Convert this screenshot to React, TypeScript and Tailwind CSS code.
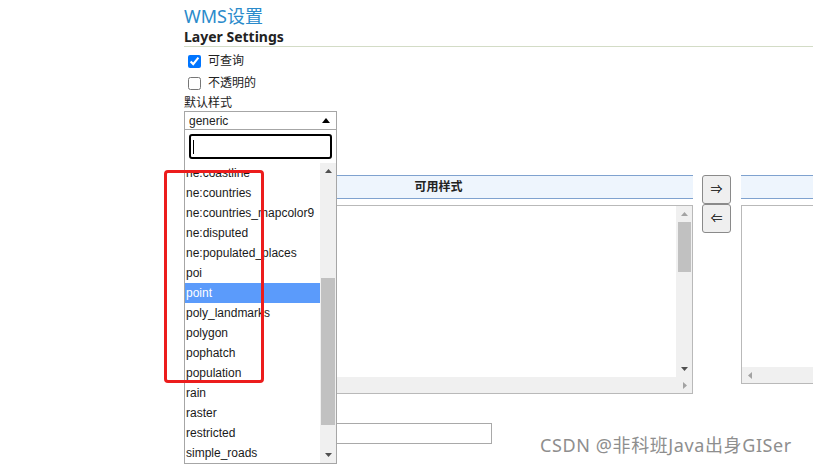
import React from 'react';

const styles = [
  'ne:coastline',
  'ne:countries',
  'ne:countries_mapcolor9',
  'ne:disputed',
  'ne:populated_places',
  'poi',
  'point',
  'poly_landmarks',
  'polygon',
  'pophatch',
  'population',
  'rain',
  'raster',
  'restricted',
  'simple_roads',
];

const font = { fontFamily: '"Noto Sans", "Noto Sans CJK SC", sans-serif' };
const listFont = { fontFamily: '"Liberation Sans", "Noto Sans CJK SC", sans-serif' };

const Tri: React.FC<{ dir: 'up' | 'down' | 'left' | 'right'; color?: string; w?: number; h?: number }> = ({
  dir,
  color = '#a3a3a3',
  w = 7,
  h = 4,
}) => {
  const pts =
    dir === 'up'
      ? `0,${h} ${w / 2},0 ${w},${h}`
      : dir === 'down'
        ? `0,0 ${w},0 ${w / 2},${h}`
        : dir === 'left'
          ? `${h},0 ${h},${w} 0,${w / 2}`
          : `0,0 0,${w} ${h},${w / 2}`;
  const vw = dir === 'up' || dir === 'down' ? w : h;
  const vh = dir === 'up' || dir === 'down' ? h : w;
  return (
    <svg width={vw} height={vh} viewBox={`0 0 ${vw} ${vh}`}>
      <polygon points={pts} fill={color} />
    </svg>
  );
};

const Dropdown: React.FC = () => (
  <div className="absolute left-[184px] top-[130px] w-[153px] h-[334px] bg-white border-x border-b border-[#a6a6a6] flex flex-col">
    <div className="pt-[4px] pl-[4px] h-[33px]">
      <div className="w-[143px] h-[25px] border-2 border-black rounded-[3px] flex items-center pl-[2px]">
        <span className="block w-px h-[14px] bg-black" />
      </div>
    </div>
    <div className="flex flex-1 min-h-0">
      <div className="w-[135px] overflow-hidden mt-[5px]" style={listFont}>
        <div className="-mt-[5px]">
          {styles.map((s) => (
            <div
              key={s}
              className={`h-[20px] pt-[1px] leading-[19px] text-[12px] pl-[1px] whitespace-nowrap ${
                s === 'point' ? 'bg-[#5b9bfb] text-white' : 'text-[#1a1a1a]'
              }`}
            >
              {s}
            </div>
          ))}
        </div>
      </div>
      <div className="w-[16px] bg-[#f0f0f0] flex flex-col items-center">
        <div className="h-[16px] flex items-center justify-center">
          <Tri dir="up" color="#505050" />
        </div>
        <div className="h-[99px]" />
        <div className="w-[14px] h-[147px] bg-[#c1c1c1]" />
        <div className="flex-1" />
        <div className="h-[16px] flex items-center justify-center">
          <Tri dir="down" color="#505050" />
        </div>
      </div>
    </div>
  </div>
);

const Header: React.FC<{ label?: string; className: string }> = ({ label, className }) => (
  <div
    className={`h-[24px] bg-[#eef5fd] border-y border-[#7fa2cf] flex items-center justify-center text-[12px] font-bold text-[#222] ${className}`}
  >
    {label}
  </div>
);

export default function App() {
  return (
    <div className="relative w-[813px] h-[465px] overflow-hidden bg-white text-[#222]" style={font}>
      <div className="pl-[184px] pt-[5px]">
        <div className="text-[18px] leading-[22px] text-[#2b8bcb]">WMS设置</div>
        <div className="text-[14px] leading-[19px] font-bold text-[#222] border-b border-[#d3dcc6]">
          Layer Settings
        </div>
        <div className="mt-[3px] h-[22px] flex items-center pl-[4px] gap-[7px] text-[12px]">
          <input type="checkbox" checked readOnly className="m-0 w-[13px] h-[13px] accent-[#0075ff]" />
          <span>可查询</span>
        </div>
        <div className="h-[22px] flex items-center pl-[4px] gap-[7px] text-[12px]">
          <input type="checkbox" readOnly className="m-0 w-[13px] h-[13px]" />
          <span>不透明的</span>
        </div>
        <div className="h-[17px] leading-[17px] text-[12px]">默认样式</div>
        <div
          className="w-[153px] h-[19px] border border-[#a6a6a6] flex items-center justify-between pl-[4px] pr-[6px] text-[12px]"
          style={listFont}
        >
          <span>generic</span>
          <Tri dir="up" color="#000" w={8} h={5} />
        </div>

        <div className="mt-[45px] flex items-start">
          <div className="w-[509px] shrink-0">
            <Header label="可用样式" className="w-full" />
            <div className="mt-[6px] h-[189px] border border-[#b9b9b9] flex flex-col">
              <div className="flex flex-1 min-h-0">
                <div className="flex-1" />
                <div className="w-[16px] bg-[#f0f0f0] flex flex-col items-center">
                  <div className="h-[16px] flex items-center justify-center">
                    <Tri dir="up" />
                  </div>
                  <div className="w-[13px] h-[50px] bg-[#c1c1c1]" />
                  <div className="flex-1" />
                  <div className="h-[16px] flex items-center justify-center">
                    <Tri dir="down" color="#505050" />
                  </div>
                </div>
              </div>
              <div className="h-[16px] bg-[#f0f0f0] flex items-center justify-end pr-[5px]">
                <Tri dir="right" />
              </div>
            </div>
          </div>

          <div className="ml-[9px] w-[29px] shrink-0 flex flex-col">
            <button className="h-[29px] border border-[#8a8a8a] rounded-[3px] bg-[#efefef] text-[12px] leading-none text-black">
              ⇒
            </button>
            <button className="h-[29px] border border-[#8a8a8a] rounded-[3px] bg-[#efefef] text-[12px] leading-none text-black">
              ⇐
            </button>
          </div>

          <div className="ml-[10px] w-[120px] shrink-0">
            <Header className="w-full" />
            <div className="mt-[6px] h-[179px] border border-[#b9b9b9] flex flex-col">
              <div className="flex-1" />
              <div className="h-[16px] bg-[#f0f0f0] flex items-center pl-[6px]">
                <Tri dir="left" />
              </div>
            </div>
          </div>
        </div>

        <div className="mt-[29px] w-[308px] h-[21px] border border-[#a9a9a9]" />
        <div className="mt-[21px] w-[308px] h-[20px] border-t border-[#767676]" />
      </div>

      <Dropdown />

      <div className="absolute left-[164px] top-[170px] w-[100px] h-[213px] border-[3px] border-[#ec1c1c] rounded-[4px]" />

      <div
        className="absolute left-[540px] top-[433px] text-[18px] leading-[24px] tracking-[0.6px] text-[#8e8e8e] whitespace-nowrap"
        style={{ textShadow: '0 0 2px #fff, 0 0 1px #fff' }}
      >
        CSDN @非科班Java出身GISer
      </div>
    </div>
  );
}
